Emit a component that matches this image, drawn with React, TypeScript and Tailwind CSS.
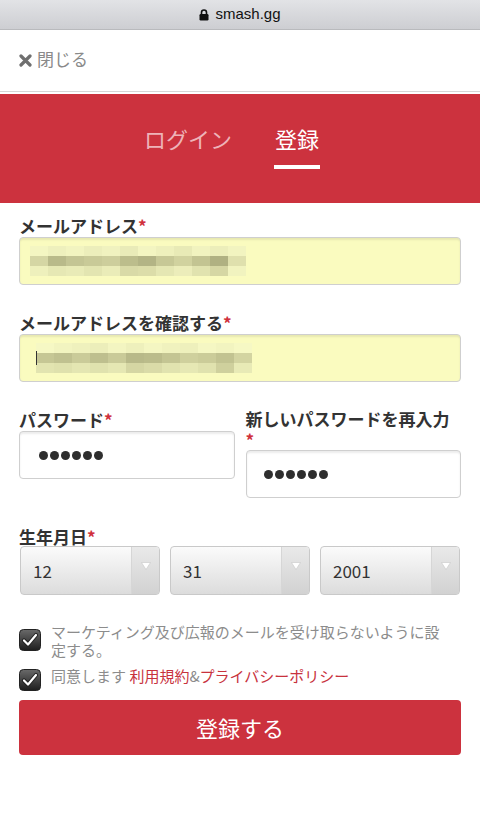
const jp = { fontFamily: '"Noto Sans CJK JP", "Noto Sans", sans-serif' };

const mosaicA = [
  ["#f4f6c2", "#eef0bd", "#f2f4c0", "#eceebb", "#f0f2bf", "#e9ebb8", "#f3f5c1", "#eef0bc", "#e8eab6", "#f1f3bf", "#eceeba", "#f2f4c0"],
  ["#d5d6a4", "#b9ba8a", "#c4c594", "#c9ca98", "#cdce9c", "#bcbd8c", "#b3b485", "#c7c896", "#d1d29f", "#c3c492", "#b0b182", "#dfe0ad"],
  ["#eef0bc", "#e6e8b4", "#e9ebb7", "#e3e5b1", "#eaecb8", "#d9daa7", "#dcdda9", "#e5e7b3", "#ecedba", "#e1e3af", "#d6d7a4", "#f1f3bf"],
];
const mosaicB = [
  ["#f6f8c4", "#f2f4c0", "#eff1bd", "#eceeba", "#f3f5c1", "#eef0bc", "#f4f6c2", "#f0f2be", "#eef0bc", "#f5f7c3", "#f2f4c0", "#f6f8c4"],
  ["#c6c795", "#c0c190", "#cacb99", "#bebf8e", "#c9ca98", "#b8b989", "#bbbc8b", "#c4c593", "#cfd09d", "#cbcc99", "#c2c391", "#d3d4a1"],
  ["#e2e4b0", "#dfe1ad", "#e4e6b2", "#e0e2ae", "#e5e7b3", "#d5d6a3", "#dadba8", "#e1e3af", "#e6e8b4", "#e0e2ae", "#cfd09d", "#e8eab6"],
];

function Mosaic({ rows }: { rows: string[][] }) {
  return (
    <div className="flex flex-col">
      {rows.map((r, i) => (
        <div key={i} className="flex">
          {r.map((c, j) => (
            <div key={j} className="w-[18px] h-[10px]" style={{ backgroundColor: c }} />
          ))}
        </div>
      ))}
    </div>
  );
}

function Label({ text }: { text: string }) {
  return (
    <div className="text-[17px] leading-[23px] font-bold text-[#333]">
      {text}
      <span className="text-[#d0303c]">*</span>
    </div>
  );
}

function Dots() {
  return (
    <div className="flex gap-[2px]">
      {[0, 1, 2, 3, 4, 5].map((i) => (
        <div key={i} className="w-[9px] h-[9px] rounded-full bg-[#2e2e2e]" />
      ))}
    </div>
  );
}

function Select({ value }: { value: string }) {
  return (
    <div className="flex-1 h-[49px] flex rounded-[4px] border border-[#c9c9c9] overflow-hidden bg-gradient-to-b from-[#fbfbfb] to-[#dcdcdc]">
      <div className="flex-1 flex items-center pl-[12px] text-[17px] text-[#333]" style={jp}>
        {value}
      </div>
      <div className="w-[28px] flex items-start justify-center pt-[15px] bg-gradient-to-b from-[#e9e9e9] to-[#d2d2d2] border-l border-[#d6d6d6]">
        <svg width="10" height="8" viewBox="0 0 10 8">
          <path d="M0.5 0.5 L9.5 0.5 L5 7.5 Z" fill="#ffffff" stroke="#c8c8c8" strokeWidth="0.6" />
        </svg>
      </div>
    </div>
  );
}

function Check() {
  return (
    <svg width="22" height="22" viewBox="0 0 22 22" className="shrink-0">
      <defs>
        <linearGradient id="cb" x1="0" y1="0" x2="0" y2="1">
          <stop offset="0" stopColor="#6a6a6a" />
          <stop offset="1" stopColor="#1e1e1e" />
        </linearGradient>
      </defs>
      <rect x="0.5" y="0.5" width="21" height="21" rx="4" fill="url(#cb)" stroke="#222" />
      <path d="M5 11.5 L9 15.5 L17 6" fill="none" stroke="#222" strokeWidth="4.2" strokeLinecap="round" strokeLinejoin="round" />
      <path d="M5 11.5 L9 15.5 L17 6" fill="none" stroke="#ffffff" strokeWidth="2.2" strokeLinecap="round" strokeLinejoin="round" />
    </svg>
  );
}

export default function App() {
  return (
    <div className="w-[480px] h-[825px] bg-white overflow-hidden" style={jp}>
      <div className="h-[30px] flex items-center justify-center gap-[6px] bg-gradient-to-b from-[#e2e3e6] to-[#cdced2] border-b border-[#b9babd]">
        <svg width="10" height="12" viewBox="0 0 10 12">
          <path d="M2.5 5 V3.5 a2.5 2.5 0 0 1 5 0 V5" fill="none" stroke="#111" strokeWidth="1.6" />
          <rect x="0.5" y="5" width="9" height="6.5" rx="1.2" fill="#111" />
        </svg>
        <span className="text-[15px] text-[#111]" style={{ fontFamily: '"Liberation Sans", Arial, sans-serif' }}>
          smash.gg
        </span>
      </div>

      <div className="h-[62px] flex items-center gap-[5px] pl-[19px] border-b border-[#d6d6d6]">
        <svg width="13" height="13" viewBox="0 0 13 13">
          <path d="M2 2 L11 11 M11 2 L2 11" stroke="#6f6f6f" strokeWidth="3.2" strokeLinecap="round" />
        </svg>
        <span className="text-[17px] text-[#8a8a8a] pb-[3px]">閉じる</span>
      </div>

      <div className="mt-[2px] h-[109px] bg-[#cc323e] flex justify-center gap-[42px] pr-[16px] pt-[28px]">
        <div className="text-[22px] leading-[32px] text-[#eeb3b8]">ログイン</div>
        <div className="flex flex-col items-center">
          <div className="text-[22px] leading-[32px] text-white">登録</div>
          <div className="mt-[11px] w-[46px] h-[4px] bg-white" />
        </div>
      </div>

      <div className="px-[19px] pt-[11px]">
        <Label text="メールアドレス" />
        <div className="h-[48px] rounded-[4px] border border-[#cfcfcf] bg-[#fafbbf] shadow-[inset_0_2px_2px_rgba(0,0,0,0.08)] flex items-center pl-[10px]">
          <Mosaic rows={mosaicA} />
        </div>

        <div className="mt-[26px]">
          <Label text="メールアドレスを確認する" />
        </div>
        <div className="h-[48px] rounded-[4px] border border-[#cfcfcf] bg-[#fafbbf] shadow-[inset_0_2px_2px_rgba(0,0,0,0.08)] flex items-center pl-[16px]">
          <div className="w-[1px] h-[14px] bg-[#333] mr-[-1px] z-10" />
          <Mosaic rows={mosaicB} />
        </div>

        <div className="mt-[26px] flex gap-[11px]">
          <div className="flex-1">
            <Label text="パスワード" />
            <div className="h-[48px] rounded-[4px] border border-[#cfcfcf] bg-white shadow-[inset_0_2px_2px_rgba(0,0,0,0.08)] flex items-center pl-[19px]">
              <Dots />
            </div>
          </div>
          <div className="flex-1">
            <div className="text-[17px] leading-[21px] font-bold text-[#333]">
              新しいパスワードを再入力
              <br />
              <span className="text-[#d0303c]">*</span>
            </div>
            <div className="h-[48px] rounded-[4px] border border-[#cfcfcf] bg-white shadow-[inset_0_2px_2px_rgba(0,0,0,0.08)] flex items-center pl-[17px]">
              <Dots />
            </div>
          </div>
        </div>

        <div className="mt-[27px]">
          <Label text="生年月日" />
        </div>
        <div className="mt-[-2px] flex gap-[10px] px-[1px]">
          <Select value="12" />
          <Select value="31" />
          <Select value="2001" />
        </div>

        <div className="mt-[28px] flex gap-[10px]">
          <div className="pt-[6px]">
            <Check />
          </div>
          <div className="w-[398px] text-[15px] leading-[18px] text-[#8c8c8c]">
            マーケティング及び広報のメールを受け取らないように設定する。
          </div>
        </div>
        <div className="mt-[8px] flex gap-[10px] items-start">
          <div className="pt-[2px]">
            <Check />
          </div>
          <div className="text-[15px] leading-[18px] text-[#8c8c8c]">
            同意します <span className="text-[#c8323d]">利用規約</span>&amp;
            <span className="text-[#c8323d]">プライバシーポリシー</span>
          </div>
        </div>

        <div className="mt-[9px] h-[55px] rounded-[4px] bg-[#cc323e] flex items-center justify-center text-[22px] text-white">
          登録する
        </div>
      </div>
    </div>
  );
}
